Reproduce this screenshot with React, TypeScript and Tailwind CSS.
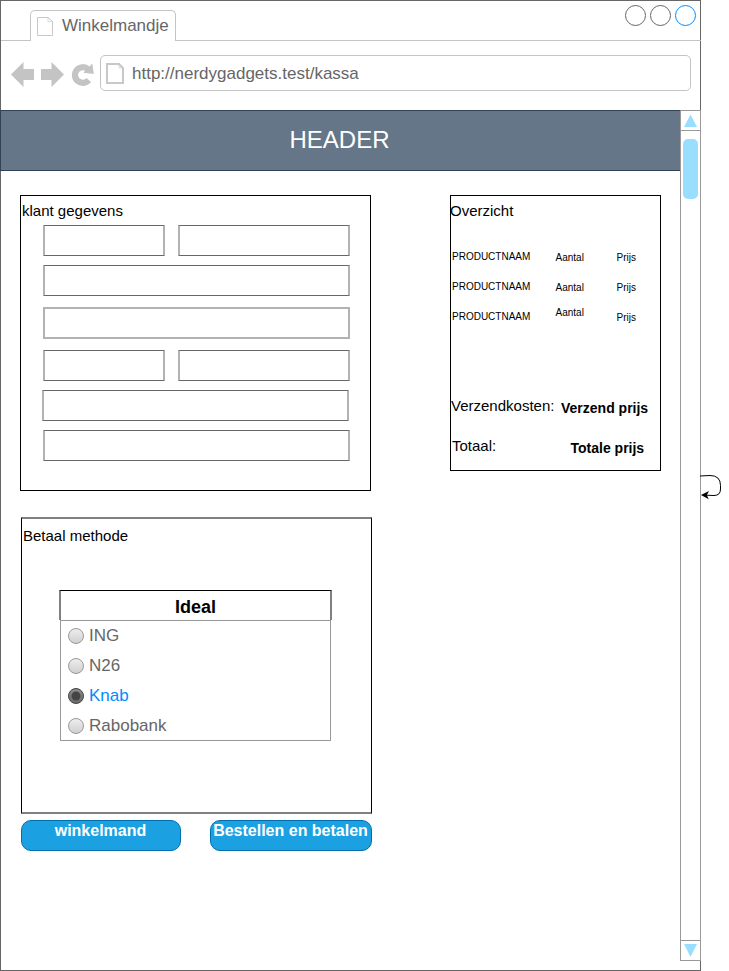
import type { ReactNode } from "react";

function Doc({ className, w, h, sw }: { className: string; w: number; h: number; sw: number }) {
  const a = sw / 2;
  return (
    <svg className={className} width={w} height={h} viewBox={`0 0 ${w} ${h}`} fill="none" stroke="#c8c8c8" strokeWidth={sw}>
      <path d={`M${a} ${a}H${w - 5}L${w - a} ${4 + a}V${h - a}H${a}Z`} />
      <path d={`M${w - 5} ${a}V${4 + a}H${w - a}`} strokeWidth={0.6} />
    </svg>
  );
}

function Field({ className }: { className: string }) {
  return <div className={`border-x-2 border-x-[#b2b2b2] ${className}`} />;
}

const solid = "h-[31px] border-y border-y-[#666]";

function Product({ amount }: { amount: string }) {
  return (
    <div className="flex h-[30px] text-[10px] leading-[12px]">
      <span className="w-[103.5px]">PRODUCTNAAM</span>
      <span className={`w-[61px] ${amount}`}>Aantal</span>
      <span className="pt-px">Prijs</span>
    </div>
  );
}

function Bank({ name, checked }: { name: string; checked?: boolean }) {
  const id = `fill-${name}`;
  return (
    <div className={`flex h-[30px] items-center gap-[5px] pl-[7px] text-[17px] leading-5 ${checked ? "text-[#008cff]" : "text-[#666]"}`}>
      <svg width="16" height="17" viewBox="0 0 16 17">
        <defs>
          <linearGradient id={id} x1="0" y1="0" x2="0" y2="1">
            <stop offset="0" stopColor={checked ? "#8c8c8c" : "#eeeeee"} />
            <stop offset="1" stopColor={checked ? "#696969" : "#cfcfcf"} />
          </linearGradient>
        </defs>
        <circle cx="8" cy="8" r="7.5" fill={`url(#${id})`} stroke={checked ? "#444" : "#999"} />
        {checked && <circle cx="8" cy="8" r="4.5" fill="#444" />}
      </svg>
      <span>{name}</span>
    </div>
  );
}

function Action({ className, children }: { className: string; children: ReactNode }) {
  return (
    <button className={`flex h-[31px] justify-center whitespace-nowrap rounded-[10px] border border-[#006eaf] bg-[#1ba1e2] pr-px text-[16px] font-bold leading-[20px] text-white ${className}`}>
      {children}
    </button>
  );
}

export default function App() {
  return (
    <div className="flex h-[971px] w-[729px] overflow-hidden bg-white font-['Liberation_Sans',Arial,sans-serif] text-black">
      <div className="flex h-[971px] w-[701px] shrink-0 flex-col border border-[#666]">
        <div className="flex h-10 shrink-0">
          <div className="w-[29px] border-b border-[#c4c4c4]" />
          <div className="mt-[9px] flex w-[146px] rounded-t-[5px] border border-b-0 border-[#c4c4c4] text-[17px] leading-5 text-[#666]">
            <Doc className="ml-[6px] mt-[6px] shrink-0" w={16} h={19} sw={1} />
            <span className="ml-[9px] mt-[5px]">Winkelmandje</span>
          </div>
          <div className="-mr-px flex flex-1 justify-end gap-1 border-b border-[#c4c4c4] pr-[5px] pt-1">
            <div className="size-[21px] rounded-full border border-[#666]" />
            <div className="size-[21px] rounded-full border border-[#666]" />
            <div className="size-[21px] rounded-full border border-[#008cff]" />
          </div>
        </div>

        <div className="flex h-[69px] shrink-0 pt-[14px]">
          <svg className="shrink-0" width="99" height="36" viewBox="1 55 99 36" fill="#c4c4c4">
            <path d="M11 74.500 23.500 62v7H34v11H23.500v7Z" />
            <path d="M64 74.500 51.500 62v7H41v11h10.500v7Z" />
            <path d="M88.800 80A7.800 7.800 0 1 1 88.200 69.400" fill="none" stroke="#c4c4c4" strokeWidth="6.2" />
            <path d="M92.300 63.500 93.800 74 83.300 72.800Z" />
          </svg>
          <div className="flex h-9 w-[591px] rounded-[5px] border border-[#c4c4c4] text-[17px] leading-5 text-[#666]">
            <Doc className="ml-[5px] mt-[7px] shrink-0" w={18} h={21} sw={2} />
            <span className="ml-2 mt-2">http://nerdygadgets.test/kassa</span>
          </div>
        </div>

        <div className="-mr-px flex h-[851px] shrink-0">
          <div className="flex w-[679px] flex-col">
            <header className="-ml-px flex h-[61px] shrink-0 items-center justify-center border-y border-l border-[#314354] bg-[#647687] pb-[2px] pr-[2px] text-[24px] leading-7 text-white">
              HEADER
            </header>

            <div className="flex pl-[19px] pt-6">
              <div className="flex flex-col">
                <section className="h-[296px] w-[351px] border border-black">
                  <h2 className="h-[29px] pl-px pt-[6px] text-[15px] leading-[18px]">klant gegevens</h2>
                  <div className="ml-[22px] flex w-[307px] justify-between">
                    <Field className={`w-[122px] ${solid}`} />
                    <Field className={`w-[172px] ${solid}`} />
                  </div>
                  <Field className={`ml-[22px] mt-[9px] w-[307px] ${solid}`} />
                  <Field className="ml-[22px] mt-[11px] h-8 w-[307px] border-y-2 border-y-[#b2b2b2]" />
                  <div className="ml-[22px] mt-[11px] flex w-[307px] justify-between">
                    <Field className={`w-[122px] ${solid}`} />
                    <Field className={`w-[172px] ${solid}`} />
                  </div>
                  <Field className={`ml-[21px] mt-[9px] w-[307px] ${solid}`} />
                  <Field className={`ml-[22px] mt-[9px] w-[307px] ${solid}`} />
                </section>

                <section className="ml-px mt-[26px] h-[297px] w-[351px] border-x border-y-2 border-x-black border-y-[#808080]">
                  <h2 className="h-[71px] pl-px pt-2 text-[15px] leading-[18px]">Betaal methode</h2>
                  <div className="ml-[37px] flex h-[30px] w-[273px] items-center justify-center border-x-2 border-t border-x-[#808080] border-t-black pt-[2px] text-[18px] font-bold leading-5">
                    Ideal
                  </div>
                  <div className="ml-[38px] h-[121px] w-[271px] border border-[#999]">
                    <Bank name="ING" />
                    <Bank name="N26" />
                    <Bank name="Knab" checked />
                    <Bank name="Rabobank" />
                  </div>
                </section>

                <div className="ml-px mt-[6px] flex w-[351px] justify-between">
                  <Action className="w-[160px]">winkelmand</Action>
                  <Action className="w-[162px]">Bestellen en betalen</Action>
                </div>
              </div>

              <section className="ml-[78px] h-[276px] w-[211px] border border-black">
                <h2 className="-ml-px h-[55px] pt-[6px] text-[15px] leading-[18px]">Overzicht</h2>
                <div className="h-[146px] pl-px">
                  <Product amount="pt-px" />
                  <Product amount="pt-px" />
                  <Product amount="-mt-1" />
                </div>
                <div className="flex h-10 whitespace-nowrap text-[15px] leading-[18px]">
                  <span className="w-[110px]">Verzendkosten:</span>
                  <b className="pt-[2px] text-[14px]">Verzend prijs</b>
                </div>
                <div className="flex h-[34px] whitespace-nowrap pl-px text-[15px] leading-[18px]">
                  <span className="w-[118.5px]">Totaal:</span>
                  <b className="pt-[2px] text-[14px]">Totale prijs</b>
                </div>
              </section>
            </div>
          </div>

          <div className="flex w-[21px] flex-col border border-[#999]">
            <div className="h-5 border-b border-[#999]">
              <svg width="19" height="19" viewBox="681 111 19 19" fill="#99ddff"><path d="M690.500 114.500 697 127H684Z" /></svg>
            </div>
            <div className="flex-1 pl-[2px] pt-2">
              <div className="h-[60px] w-[15px] rounded-[5px] bg-[#99ddff]" />
            </div>
            <div className="h-5 border-t border-[#999]">
              <svg width="19" height="19" viewBox="681 941 19 19" fill="#99ddff"><path d="M690.500 957 697 944H684Z" /></svg>
            </div>
          </div>
        </div>
      </div>

      <svg className="-ml-px mt-[470px] shrink-0" width="29" height="32" viewBox="700 470 29 32">
        <path d="M700 476 710 475.500Q720.500 475.500 720.500 485.500V489Q720.500 495.500 714 495.500L706 495.200" fill="none" stroke="#000" />
        <path d="M701 495 709 491 706.800 495.200 708.800 499.200Z" />
      </svg>
    </div>
  );
}
